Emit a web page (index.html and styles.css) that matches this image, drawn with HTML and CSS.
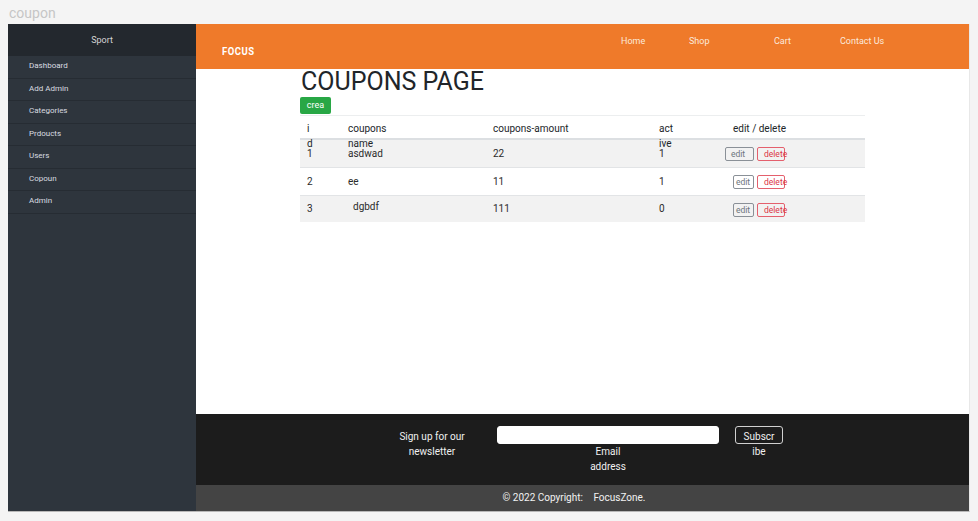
FILE: index.html
```html
<!DOCTYPE html>
<html>
<head>
<meta charset="utf-8">
<title>coupon</title>
<link rel="stylesheet" href="styles.css">
</head>
<body>
<div class="page-title">coupon</div>
<div class="frame">
  <aside class="sidebar">
    <div class="side-head">Sport</div>
    <ul class="side-menu">
      <li>Dashboard</li>
      <li>Add Admin</li>
      <li>Categories</li>
      <li>Prdoucts</li>
      <li>Users</li>
      <li>Copoun</li>
      <li>Admin</li>
    </ul>
  </aside>
  <div class="main">
    <header class="topbar">
      <div class="brand"><span>FOCUS</span></div>
      <nav class="nav">
        <a>Home</a>
        <a>Shop</a>
        <a>Cart</a>
        <a>Contact Us</a>
      </nav>
    </header>
    <section class="content">
      <div class="container">
        <h1 class="title">COUPONS PAGE</h1>
        <button class="btn-create">crea</button>
        <div class="table">
          <div class="row head">
            <div class="cell">i<br>d</div>
            <div class="cell">coupons<br>name</div>
            <div class="cell">coupons-amount</div>
            <div class="cell">act<br>ive</div>
            <div class="cell">edit / delete</div>
          </div>
          <div class="row striped">
            <div class="cell up">1</div>
            <div class="cell up">asdwad</div>
            <div class="cell">22</div>
            <div class="cell up">1</div>
            <div class="cell actions"><button class="btn-edit wide">edit</button><button class="btn-del">delete</button></div>
          </div>
          <div class="row">
            <div class="cell">2</div>
            <div class="cell">ee</div>
            <div class="cell">11</div>
            <div class="cell">1</div>
            <div class="cell actions"><button class="btn-edit">edit</button><button class="btn-del">delete</button></div>
          </div>
          <div class="row striped">
            <div class="cell">3</div>
            <div class="cell"><span class="shift">dgbdf</span></div>
            <div class="cell">111</div>
            <div class="cell">0</div>
            <div class="cell actions"><button class="btn-edit">edit</button><button class="btn-del">delete</button></div>
          </div>
        </div>
      </div>
    </section>
    <footer class="footer">
      <div class="signup">Sign up for our newsletter</div>
      <div class="email">
        <input class="email-input" type="text">
        <label class="email-label">Email address</label>
      </div>
      <button class="btn-sub">Subscribe</button>
    </footer>
    <div class="copyright">© 2022 Copyright: <span class="brand-link">FocusZone.</span></div>
  </div>
</div>
</body>
</html>
```
FILE: styles.css
```css
* { box-sizing: border-box; }
html, body { margin: 0; padding: 0; }
body {
  background: #f4f4f4;
  font-family: Roboto, "Liberation Sans", sans-serif;
  color: #212529;
}
.page-title {
  height: 24px;
  padding-left: 9px;
  padding-top: 4px;
  font-size: 14px;
  line-height: 18px;
  color: #c6c6c6;
}
.frame {
  margin-left: 8px;
  width: 962px;
  height: 488px;
  display: flex;
  border-bottom: 1px solid #b8b8b8;
  border-right: 1px solid #e8e8e8;
}
.sidebar {
  width: 188px;
  flex: none;
  background: #2e353d;
}
.side-head {
  height: 32px;
  background: #23282e;
  color: #d5d5d5;
  font-size: 9px;
  line-height: 32px;
  text-align: center;
}
.side-menu {
  list-style: none;
  margin: 0;
  padding: 0;
}
.side-menu li {
  height: 22.5px;
  border-bottom: 1px solid #262c33;
  padding: 3px 0 0 21px;
  font-size: 8px;
  line-height: 13px;
  color: #d9dce0;
}
.main {
  flex: 1;
  display: flex;
  flex-direction: column;
  background: #fff;
}
.topbar {
  height: 45px;
  flex: none;
  background: #ef7a2a;
  display: flex;
  color: #fff;
}
.brand {
  padding: 16px 0 0 26px;
  width: 425px;
}
.brand span {
  display: inline-block;
  font-weight: 700;
  font-size: 11px;
  line-height: 14px;
  letter-spacing: 0.6px;
  transform: scaleX(0.86);
  transform-origin: left center;
}
.nav {
  display: grid;
  grid-template-columns: 68px 85px 66px auto;
  padding-top: 10px;
  font-size: 9px;
  line-height: 14px;
  color: #fbe9dc;
}
.content {
  flex: 1;
  display: flex;
  justify-content: center;
}
.container {
  width: 565px;
}
.title {
  margin: 0 0 2px 1px;
  font-size: 25px;
  line-height: 26px;
  font-weight: 400;
  color: #212529;
}
.btn-create {
  display: block;
  width: 31px;
  height: 17px;
  padding: 0;
  border: none;
  border-radius: 2px;
  background: #28a745;
  color: #fff;
  font-family: Roboto, "Liberation Sans", sans-serif;
  font-size: 9px;
  line-height: 17px;
  margin: 0 0 1px 0;
}
.table {
  border-top: 1px solid #eceeef;
  font-size: 10px;
}
.row {
  display: grid;
  grid-template-columns: 41px 145px 166px 74px 1fr;
  height: 27px;
  border-top: 1px solid #e2e4e6;
}
.row:nth-child(3) { height: 28px; }
.row.striped { background: #f2f2f2; }
.row.head {
  height: 24px;
  border-top: none;
  border-bottom: 2px solid #dcdfe2;
  background: #fff;
}
.row.head + .row { border-top: none; }
.head .cell {
  padding: 6px 7px 0;
  line-height: 14.5px;
  height: 24px;
  align-items: flex-start;
  color: #212529;
  position: relative;
  z-index: 1;
}
.cell {
  display: flex;
  align-items: center;
  padding: 0 7px;
  line-height: 12px;
  color: #2b2b2b;
}
.cell.up { align-items: flex-start; padding-top: 8px; }
.shift { margin-left: 5px; margin-bottom: 4px; }
.actions { gap: 3px; padding-top: 1px; }
.actions button {
  height: 14px;
  padding: 0;
  background: transparent;
  border-radius: 2px;
  font-family: Roboto, "Liberation Sans", sans-serif;
  font-size: 8.5px;
  line-height: 12px;
  white-space: nowrap;
  text-align: left;
  overflow: visible;
}
.btn-edit {
  width: 21px;
  border: 1px solid #8a9097;
  color: #6c757d;
  padding-left: 2px !important;
}
.btn-edit.wide {
  width: 29px;
  margin-left: -8px;
  padding-left: 5px !important;
}
.btn-del {
  width: 28px;
  border: 1px solid #e4606d;
  color: #dc3545;
  padding-left: 6px !important;
}
.footer {
  height: 71px;
  flex: none;
  background: #1c1c1c;
  color: #f0f0f0;
  display: flex;
  justify-content: center;
  align-items: flex-start;
  gap: 17px;
  padding-top: 12px;
  font-size: 10px;
  line-height: 15px;
}
.signup {
  width: 96px;
  text-align: center;
  padding: 3px 4px 0;
  margin-left: 2px;
}
.email {
  width: 222px;
  display: flex;
  flex-direction: column;
  align-items: center;
}
.email-input {
  width: 222px;
  height: 18px;
  border: 1px solid #fff;
  border-radius: 3px;
  background: #fff;
  margin: 0;
}
.email-label {
  width: 40px;
  text-align: center;
}
.btn-sub {
  width: 48px;
  height: 18px;
  padding: 2px 7px 0;
  border: 1px solid #d0d0d0;
  border-radius: 3px;
  background: transparent;
  color: #f0f0f0;
  font-family: Roboto, "Liberation Sans", sans-serif;
  font-size: 10px;
  line-height: 15px;
  word-break: break-all;
  overflow: visible;
  text-align: center;
  display: block;
  margin-left: -1px;
}
.copyright {
  height: 26px;
  flex: none;
  background: #444;
  color: #f2f2f2;
  font-size: 10px;
  line-height: 26px;
  text-align: center;
  padding-right: 17px;
}
.brand-link { margin-left: 8px; }
```
